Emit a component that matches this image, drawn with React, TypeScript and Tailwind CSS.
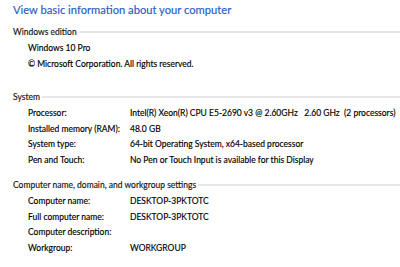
const font = { fontFamily: 'Lato, "Noto Sans", sans-serif' };

type Row = { label: string; value: string };

const system: Row[] = [
  { label: 'Processor:', value: 'Intel(R) Xeon(R) CPU E5-2690 v3 @ 2.60GHz\u00a0\u00a0 2.60 GHz\u00a0 (2 processors)' },
  { label: 'Installed memory (RAM):', value: '48.0 GB' },
  { label: 'System type:', value: '64-bit Operating System, x64-based processor' },
  { label: 'Pen and Touch:', value: 'No Pen or Touch Input is available for this Display' },
];

const computer: Row[] = [
  { label: 'Computer name:', value: 'DESKTOP-3PKTOTC' },
  { label: 'Full computer name:', value: 'DESKTOP-3PKTOTC' },
  { label: 'Computer description:', value: '' },
  { label: 'Workgroup:', value: 'WORKGROUP' },
];

function SectionHeader({ title }: { title: string }) {
  return (
    <div className="flex items-center h-[16px] pl-[13px]">
      <span className="text-[#1e1e1e] whitespace-nowrap">{title}</span>
      <div className="flex-1 h-[2px] bg-[#e6e6e6] ml-[2px] -mt-[1px]" />
    </div>
  );
}

function InfoRows({ rows }: { rows: Row[] }) {
  return (
    <div className="flex flex-col pl-[28px] mt-[1px]">
      {rows.map((r) => (
        <div key={r.label} className="flex h-[15.5px] items-center whitespace-nowrap">
          <span className="w-[102px] shrink-0">{r.label}</span>
          <span>{r.value}</span>
        </div>
      ))}
    </div>
  );
}

export default function App() {
  return (
    <div
      className="w-[400px] h-[267px] bg-white overflow-hidden text-[8.5px] text-black [-webkit-text-stroke:0.15px_#000]"
      style={font}
    >
      <h1 className="text-[11.2px] text-[#2a5cc4] pl-[13px] pt-[2px] h-[24px] leading-[16px] [-webkit-text-stroke:0.15px_#2a5cc4]">
        View basic information about your computer
      </h1>

      <SectionHeader title="Windows edition" />
      <div className="flex flex-col pl-[28px] mt-[1px]">
        <div className="h-[15.5px] flex items-center">Windows 10 Pro</div>
        <div className="h-[15.5px] flex items-center">© Microsoft Corporation. All rights reserved.</div>
      </div>

      <div className="mt-[17px]">
        <SectionHeader title="System" />
        <InfoRows rows={system} />
      </div>

      <div className="mt-[9px]">
        <SectionHeader title="Computer name, domain, and workgroup settings" />
        <InfoRows rows={computer} />
      </div>
    </div>
  );
}
